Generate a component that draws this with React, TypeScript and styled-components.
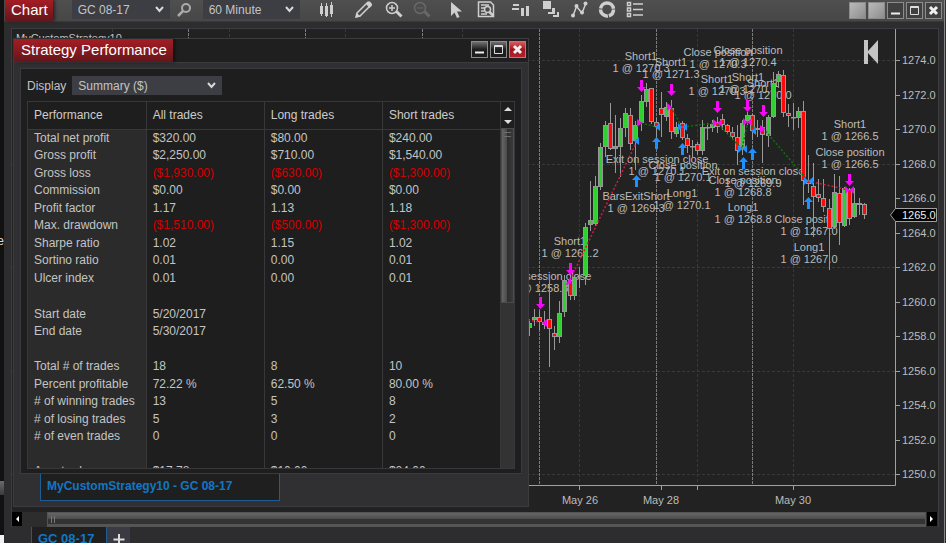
import React from "react";
import styled, { createGlobalStyle, css } from "styled-components";

const GlobalStyle = createGlobalStyle`
  * { box-sizing: border-box; }
  html, body { margin: 0; background: #121212; }
  body, button, select { font-family: "Liberation Sans", Arial, sans-serif; font-size: 12px; color: #c4c4c4; }
  button { padding: 0; border: 0; background: none; }
`;

const Desktop = styled.div`
  display: flex;
  height: 100vh;
  overflow: hidden;
  background: #2a2c30;
`;

const Behind = styled.div`
  width: 4px;
  flex: none;
  display: flex;
  flex-direction: column;
  overflow: hidden;
  background: #111111;
  color: #d8d8d8;
  line-height: 16px;
`;
const BehindText = styled.span`
  direction: rtl;
  margin-top: auto;
  flex: 0 0 16px;
`;
const BehindBar = styled.div`
  margin-top: auto;
  height: 14px;
  background: linear-gradient(#6a6a6a, #3a3a3a);
`;
const BehindPaper = styled.div`
  margin-top: 40px;
  height: 8px;
  background: #f0f0f0;
`;

const ChartWindow = styled.main`
  flex: 1;
  min-width: 0;
  margin-right: 1px;
  display: flex;
  flex-direction: column;
  background: #2d2d30;
  border-right: 1px solid #85878a;
`;

const Toolbar = styled.header`
  flex: none;
  height: 22px;
  display: flex;
  align-items: flex-start;
  background: linear-gradient(#4f4f4f, #474747);
  border-bottom: 1px solid #3a3a3c;
`;

const titleTab = css`
  margin: 0;
  font-size: 15px;
  font-weight: 400;
  color: #ffffff;
  background: linear-gradient(#a51d24, #64161b);
  box-shadow: 2px 0 3px rgba(0, 0, 0, 0.5);
`;
const ChartTitle = styled.h1`
  ${titleTab}
  padding: 0 5px 0 6px;
  margin-left: 1px;
  line-height: 20px;
  height: 21px;
`;

const Picker = styled.div<{ $width: number; $left: number }>`
  position: relative;
  flex: none;
  width: ${(p) => p.$width}px;
  margin-left: ${(p) => p.$left}px;
  color: #d8d8d8;
`;
const PickerSelect = styled.select`
  appearance: none;
  display: block;
  width: 100%;
  height: 19px;
  padding: 0 20px 0 6px;
  border: 0;
  border-radius: 0;
  background: #3d3d44;
  outline: none;
`;
const PickerArrow = styled.svg`
  position: absolute;
  right: 5px;
  top: 5px;
  width: 11px;
  height: 9px;
  pointer-events: none;
`;

const ToolButton = styled.button<{ $left: number; $dim?: boolean }>`
  flex: none;
  width: 20px;
  height: 20px;
  margin-left: ${(p) => p.$left}px;
  color: ${(p) => (p.$dim ? "#686868" : "#cfcfcf")};
`;
const Icon = styled.svg`
  display: block;
  width: 20px;
  height: 20px;
`;

const WindowButtons = styled.div<{ $gap: number }>`
  display: flex;
  gap: ${(p) => p.$gap}px;
  margin-left: auto;
  padding: 2px 2px 0 0;
`;
const WinButton = styled.button<{ $kind?: "link" | "close" | "dark" }>`
  width: 17px;
  height: 17px;
  border: 1px solid #8c8c8c;
  background: ${(p) =>
    p.$kind === "link"
      ? "linear-gradient(135deg, #b9b9b9, #a0a0a0 60%, #8b8b8b)"
      : p.$kind === "close"
        ? "linear-gradient(#d55a60, #a5151d 50%, #b3222a)"
        : p.$kind === "dark"
          ? "linear-gradient(#707070, #1e1e1e 50%)"
          : "#404040"};
`;
const WinIcon = styled.svg`
  display: block;
  width: 15px;
  height: 15px;
`;

const Workspace = styled.section`
  position: relative;
  flex: 1;
  min-height: 0;
  display: flex;
  flex-direction: column;
  margin: 6px 5px 0 7px;
  border: 1px solid #3c3c40;
  border-bottom: 0;
  background: #222222;
`;
const Plot = styled.svg`
  flex: 1;
  min-height: 0;
  display: block;
  width: 100%;
  font-family: "Liberation Sans", Arial, sans-serif;
  font-size: 11px;
`;

const HScroll = styled.div`
  flex: none;
  height: 15px;
  display: flex;
  gap: 1px;
  background: #2d2d2d;
`;
const HScrollButton = styled.button`
  width: 10px;
  height: 14px;
  margin: 0 1px 0 0;
  background: #000000;
`;
const HTrack = styled.div`
  flex: 1;
  padding-left: 23px;
`;
const HThumb = styled.div`
  height: 15px;
  padding: 3px 3px;
  border: 1px solid #555555;
  background: linear-gradient(#666666, #4a4a4a 50%, #333333 50%, #333333 85%, #555555 85%);
`;
const Grip = styled.div`
  width: 4px;
  height: 7px;
  border: 1px solid #777777;
  border-width: 0 1px;
`;

const SheetTabs = styled.nav`
  flex: none;
  height: 16px;
  padding-left: 27px;
  display: flex;
  overflow: hidden;
`;
const SheetTab = styled.button`
  height: 24px;
  padding: 0 12px 0 6px;
  border: 1px solid #1e5c92;
  border-top: 0;
  background: #1f1f1f;
  color: #1177c4;
  font-size: 13px;
  font-weight: 700;
  line-height: 24px;
`;
const AddTab = styled.button`
  width: 23px;
  height: 24px;
  background: #3b3a42;
`;

const Dialog = styled.section`
  position: absolute;
  left: 1px;
  top: 9px;
  width: 516px;
  max-width: 100%;
  display: flex;
  flex-direction: column;
  border: 1px solid #3c3c40;
  background: #303033;
`;
const DialogHeader = styled.header`
  display: flex;
  height: 24px;
  background: #1f1f1f;
  border-bottom: 1px solid #3c3c40;
`;
const DialogTitle = styled.h2`
  ${titleTab}
  padding: 0 6px 0 7px;
  line-height: 22px;
`;
const DialogBody = styled.div`
  margin: 5px 6px 0;
  padding: 7px 6px 4px;
  border: 1px solid #3a3a3d;
  background: #1e1e1e;
`;
const Field = styled.label`
  display: flex;
  align-items: center;
  margin-bottom: 6px;
`;
const Report = styled.div`
  display: grid;
  grid-template-columns: 1fr 13px;
  height: 368px;
  overflow: hidden;
  border: 1px solid #38383a;
`;
const ReportTable = styled.table`
  width: 100%;
  height: min-content;
  table-layout: fixed;
  border-collapse: collapse;
`;
const HeadCell = styled.th`
  height: 27px;
  padding: 0 6px;
  font-weight: 400;
  text-align: left;
  color: #cccccc;
  border-right: 1px solid #38383a;
  border-bottom: 1px solid #38383a;
  width: 25%;
`;
const Row = styled.tr<{ $blank: boolean }>`
  height: 18px;
  line-height: 17px;
  &:nth-child(even) { height: ${(p) => (p.$blank ? 18 : 17)}px; }
`;
const NameCell = styled.th`
  padding: 0 6px;
  font-weight: 400;
  text-align: left;
  white-space: nowrap;
  background: #2b2b2b;
  border-right: 1px solid #38383a;
`;
const Cell = styled.td<{ $loss: boolean }>`
  padding: 0 6px;
  white-space: nowrap;
  border-right: 1px solid #38383a;
  color: ${(p) => (p.$loss ? "#d20000" : "inherit")};
`;
const VScroll = styled.div`
  display: flex;
  flex-direction: column;
  background: #333333;
`;
const VScrollButton = styled.button`
  height: 13px;
  background: #1e1e1e;
`;
const VThumb = styled.div`
  height: 175px;
  padding: 3px 2px;
  border: 1px solid #4c4c4c;
  background: linear-gradient(90deg, #666666, #484848 48%, #2e2e2e 50%, #3a3a3a);
`;
const VGrip = styled.div`
  height: 5px;
  border: 1px solid #6c6c6c;
  border-width: 1px 0;
`;
const ScrollIcon = styled.svg`
  display: block;
  margin: auto;
  width: 10px;
  height: 10px;
`;
const StrategyTab = styled.button`
  align-self: flex-start;
  width: 240px;
  height: 27px;
  margin: 0 0 5px 26px;
  padding: 0 0 2px 6px;
  text-align: left;
  font-weight: 700;
  color: #1177c4;
  background: #1f1f1f;
  border: 1px solid #1e5c92;
  border-top: 0;
`;

const rows: string[][] = [
  ["Total net profit", "$320.00", "$80.00", "$240.00"],
  ["Gross profit", "$2,250.00", "$710.00", "$1,540.00"],
  ["Gross loss", "($1,930.00)", "($630.00)", "($1,300.00)"],
  ["Commission", "$0.00", "$0.00", "$0.00"],
  ["Profit factor", "1.17", "1.13", "1.18"],
  ["Max. drawdown", "($1,510.00)", "($500.00)", "($1,300.00)"],
  ["Sharpe ratio", "1.02", "1.15", "1.02"],
  ["Sortino ratio", "0.01", "0.00", "0.01"],
  ["Ulcer index", "0.01", "0.00", "0.01"],
  ["", "", "", ""],
  ["Start date", "5/20/2017", "", ""],
  ["End date", "5/30/2017", "", ""],
  ["", "", "", ""],
  ["Total # of trades", "18", "8", "10"],
  ["Percent profitable", "72.22 %", "62.50 %", "80.00 %"],
  ["# of winning trades", "13", "5", "8"],
  ["# of losing trades", "5", "3", "2"],
  ["# of even trades", "0", "0", "0"],
  ["", "", "", ""],
  ["Avg. trade", "$17.78", "$10.00", "$24.00"],
];

type Candle = [x: number, high: number, low: number, top: number, bottom: number, up: 0 | 1];
const candles: Candle[] = [
  [529, 319, 336, 323, 328, 1], [534, 309, 326, 317, 320, 1], [539, 311, 330, 317, 322, 0],
  [544, 311, 329, 322, 325, 1], [549, 280, 367, 319, 329, 0], [554, 326, 350, 333, 337, 0],
  [559, 301, 343, 313, 337, 1], [564, 275, 317, 280, 312, 1], [570, 274, 300, 280, 296, 0],
  [574, 275, 300, 277, 296, 1], [579, 267, 288, 276, 277, 1], [585, 223, 285, 227, 276, 1],
  [590, 181, 231, 220, 225, 1], [595, 176, 226, 186, 224, 1], [600, 143, 190, 147, 187, 1],
  [605, 121, 157, 125, 147, 1], [610, 103, 150, 123, 149, 0], [615, 115, 173, 146, 149, 1],
  [620, 118, 177, 128, 147, 1], [625, 108, 137, 113, 128, 1], [630, 108, 150, 115, 144, 0],
  [635, 121, 170, 125, 141, 1], [641, 95, 131, 101, 123, 1], [646, 83, 107, 89, 102, 1],
  [651, 88, 124, 88, 122, 0], [656, 118, 137, 122, 127, 0], [661, 92, 137, 108, 115, 0],
  [666, 102, 121, 107, 117, 1], [671, 100, 139, 108, 132, 0], [676, 122, 137, 127, 134, 1],
  [682, 121, 140, 123, 138, 0], [687, 134, 153, 138, 146, 0], [692, 140, 157, 146, 147, 1],
  [697, 142, 155, 144, 151, 0], [702, 120, 155, 127, 151, 1], [707, 123, 140, 127, 128, 1],
  [712, 120, 132, 124, 128, 1], [717, 117, 133, 122, 127, 0], [722, 114, 130, 119, 125, 0],
  [727, 124, 134, 125, 132, 0], [732, 127, 140, 132, 137, 0], [737, 125, 165, 137, 151, 0],
  [742, 120, 155, 123, 149, 1], [747, 112, 125, 115, 121, 1], [752, 114, 140, 115, 131, 0],
  [757, 120, 137, 128, 130, 1], [762, 120, 163, 127, 135, 0], [768, 115, 147, 117, 136, 1],
  [773, 72, 118, 83, 117, 1], [778, 71, 88, 74, 82, 1], [783, 70, 117, 75, 113, 0],
  [788, 104, 127, 113, 116, 0], [793, 103, 130, 117, 118, 1], [798, 107, 128, 111, 118, 1],
  [803, 101, 205, 111, 181, 0], [808, 155, 193, 181, 184, 0], [813, 163, 237, 186, 197, 0],
  [818, 179, 202, 194, 198, 0], [823, 179, 212, 198, 207, 0], [829, 199, 270, 208, 229, 0],
  [834, 174, 229, 192, 227, 1], [839, 176, 245, 193, 223, 0], [844, 187, 227, 188, 226, 1],
  [849, 188, 225, 189, 219, 0], [854, 188, 218, 203, 217, 1], [859, 198, 215, 203, 205, 0],
  [864, 203, 219, 204, 215, 0],
];

type Note = [x: number, y: number, name: string, price: string];
const notes: Note[] = [
  [570, 245, "Short1", "1261.2"], [540, 280, "Exit on session close", "1258.8"],
  [641, 60, "Short1", "1270.3"], [671, 66, "Short1", "1271.3"],
  [718, 56, "Close position", "1270.3"], [748, 54, "Close position", "1270.4"],
  [717, 83, "Short1", "1270.3"], [748, 81, "Short1", "1270.1"], [763, 87, "Short1", "1270.0"],
  [657, 163, "Exit on session close", "1270.1"], [683, 169, "Close position", "1270.1"],
  [636, 200, "BarsExitShort", "1269.3"], [682, 197, "Long1", "1270.1"],
  [753, 175, "Exit on session close", "1269.9"], [743, 184, "Close position", "1268.8"],
  [743, 211, "Long1", "1268.8"], [809, 223, "Close position", "1267.0"],
  [809, 251, "Long1", "1267.0"], [850, 128, "Short1", "1266.5"],
  [850, 156, "Close position", "1266.5"],
];

const sells = [[540, 309], [570, 275], [641, 92], [671, 96], [717, 113], [747, 112], [763, 117], [849, 186]];
const buys = [[636, 175], [656, 137], [682, 143], [743, 157], [752, 148], [808, 197]];
const losses = ["M528 320L540 322", "M570 280L637 141", "M808 181L849 190"];
const gains = ["M641 123L656 127", "M671 107L682 127L717 123L742 149L748 121L757 131", "M763 128L808 181"];
const sellMarks = ["M547 319v8l-5-4z", "M565 285l6-2v-6z", "M637 119v8l5-4z", "M667 103v8l5-4z", "M713 119v8l9-8v8z", "M743 118v8l9-8v8z", "M760 125v8l5-4z", "M845 186v8l9-8v8z"];
const buyMarks = ["M639 137v8l-5-4z", "M660 123v8l-5-4z", "M678 123v8l9-8v8z", "M738 145v8l9-8v8z", "M756 127v8l-5-4z", "M804 177v8l9-8v8z"];
const prices = Array.from({ length: 13 }, (_, i) => 1274 - i * 2);
const priceY = (p: number) => 60 + (1274 - p) * 17.25;

function PriceChart() {
  return (
    <Plot viewBox="12 29 926 483" preserveAspectRatio="xMaxYMin meet" role="img" aria-label="GC 08-17 60 minute chart">
      <g stroke="#393939" strokeDasharray="3 2">
        {[1274, 1268, 1262, 1256, 1250].map((p) => <path key={p} d={`M12 ${Math.round(priceY(p)) + 0.5}H895`} />)}
        {[112, 229, 345, 462, 579, 697, 793].map((x) => <path key={x} d={`M${x}.5 29V484`} />)}
      </g>
      <g stroke="#7c7c7c" strokeDasharray="3 1">
        {[188, 305, 422, 539, 656, 752].map((x) => <path key={x} d={`M${x}.5 29V484`} />)}
      </g>
      <text x="16" y="42" fill="#c4c4c4">MyCustomStrategy10</text>
      <g fill="#bcbcbc" textAnchor="middle">
        {notes.map(([x, y, name, price], i) => (
          <React.Fragment key={i}>
            <text x={x} y={y}>{name}</text>
            <text x={x} y={y + 12}>{`1 @ ${price}`}</text>
          </React.Fragment>
        ))}
      </g>
      {candles.map(([x, high, low, top, bottom, up]) => (
        <g key={x} stroke="#989898">
          <path d={`M${x}.5 ${high}V${low}`} />
          <rect x={x - 1.5} y={top + 0.5} width="4" height={Math.max(bottom - top - 1, 0.5)} fill={up ? "#2fd02f" : "#ff0808"} />
        </g>
      ))}
      <g fill="none" strokeDasharray="2 2" strokeWidth="1.500">
        {losses.map((d) => <path key={d} d={d} stroke="#d01c40" />)}
        {gains.map((d) => <path key={d} d={d} stroke="#0a730a" />)}
      </g>
      <g fill="#f808f8">
        {sells.map(([x, y]) => <path key={x} d={`M${x - 1} ${y - 12}h3v7h3l-4.500 5l-4.500 -5h3z`} />)}
        {sellMarks.map((d) => <path key={d} d={d} />)}
      </g>
      <g fill="#1e90ff">
        {buys.map(([x, y]) => <path key={x} d={`M${x - 1} ${y + 12}h3v-7h3l-4.500 -5l-4.500 5h3z`} />)}
        {buyMarks.map((d) => <path key={d} d={d} />)}
      </g>
      <path d="M864 40h4v11l10-11v24l-10-11v11h-4z" fill="#c4c4c4" />
      <g stroke="#a0a0a0" fill="none">
        <path d="M895.5 29V485.500H528" />
        {prices.map((p) => <path key={p} d={`M896 ${Math.round(priceY(p)) + 0.5}h4`} />)}
        {[579, 661, 697, 793].map((x) => <path key={x} d={`M${x}.5 486v4`} />)}
      </g>
      <g fill="#bcbcbc">
        {prices.map((p) => <text key={p} x="902" y={Math.round(priceY(p)) + 4}>{p.toFixed(1)}</text>)}
        <g textAnchor="middle">
          <text x="580" y="504">May 26</text>
          <text x="661" y="504">May 28</text>
          <text x="793" y="504">May 30</text>
        </g>
      </g>
      <path d="M890.500 215l5-6.500h41v13h-41z" fill="#000" stroke="#a0a0a0" />
      <text x="902" y="219" fill="#eeeeee">1265.0</text>
    </Plot>
  );
}

function Select({ label, value, width, left }: { label: string; value: string; width: number; left: number }) {
  return (
    <Picker $width={width} $left={left}>
      <PickerSelect aria-label={label} defaultValue={value}><option>{value}</option></PickerSelect>
      <PickerArrow viewBox="0 0 11 9"><path d="M2 2l3.500 4L9 2" fill="none" stroke="currentColor" strokeWidth="2" /></PickerArrow>
    </Picker>
  );
}

const line = { fill: "none", stroke: "currentColor" };
const tools: { name: string; left: number; dim?: boolean; art: React.ReactNode }[] = [
  { name: "Chart style", left: 17, art: <><path d="M3 6h3v8H3zM8 6h3v10H8zM13 5h3v9h-3z" fill="currentColor" /><path d="M4.500 3v13M9.500 3v14M14.500 2v15" {...line} /></> },
  { name: "Drawing tools", left: 17, art: <><path d="M3 13L13.500 2.500l3 3L6 16l-4 1z" {...line} strokeWidth="1.500" /><path d="M2 17.500l1-4.500 3.500 3.500zM12 4l2-2.500h2L18 4v1.500L15.500 8z" fill="currentColor" /></> },
  { name: "Zoom in", left: 10, art: <><circle cx="8" cy="8" r="5.500" {...line} strokeWidth="1.500" /><path d="M8 5v6M5 8h6" {...line} strokeWidth="1.500" /><path d="M12.500 11.500l5 5" {...line} strokeWidth="3" /></> },
  { name: "Zoom out", left: 8, dim: true, art: <><circle cx="8" cy="8" r="5.500" {...line} strokeWidth="1.500" /><path d="M5 8h6" {...line} /><path d="M12.500 11.500l5 5" {...line} strokeWidth="3" /></> },
  { name: "Cursor", left: 14, art: <path d="M5 2v14l3.500-3.500L11 18l2.500-1L11 11.500h5z" fill="currentColor" /> },
  { name: "Data box", left: 10, art: <><path d="M2.500 2h12l3 3v11.500h-15zM5 5h8M5 8h4M5 11h3M5 14h6" {...line} strokeWidth="1.500" /><circle cx="11.500" cy="9.500" r="3" fill="#4b4b4b" stroke="currentColor" strokeWidth="1.500" /><path d="M13.500 12l4 4" {...line} strokeWidth="2.500" /></> },
  { name: "Indicators", left: 14, art: <path d="M3 4h6v2H3zM2 8h7v2H2zM11 8h3v8h-3zM16 6h3v10h-3z" fill="currentColor" /> },
  { name: "Strategies", left: 11, art: <path d="M2 1h8v8h-8zM11 8v4h-4v2h7v-6zM16 12v3h-4v2h6v-5z" fill="currentColor" /> },
  { name: "Line study", left: 8, art: <><path d="M4 16l3.500-9.500L13 13l4-10" {...line} strokeWidth="1.500" /><g fill="currentColor"><circle cx="4" cy="15.500" r="2" /><circle cx="7.500" cy="6" r="2" /><circle cx="13" cy="12.500" r="2" /><circle cx="16.500" cy="3.500" r="2" /></g></> },
  { name: "Trader", left: 8, art: <circle cx="10" cy="9.500" r="6.500" {...line} strokeWidth="3.500" strokeDasharray="8 1 11 1 18 2" /> },
  { name: "Properties", left: 8, art: <path d="M2.500 2.500h3v3h-3zM2.500 8h3v3h-3zM2.500 13.500h3v3h-3zM8 4h10M8 9.500h10M8 15h10" {...line} strokeWidth="1.500" /> },
];

const Minimize = () => <WinIcon viewBox="0 0 15 15"><path d="M3 10.500h9" stroke="#eee" strokeWidth="2" /></WinIcon>;
const Maximize = () => <WinIcon viewBox="0 0 15 15"><path d="M3.500 3.500h8v8h-8zM3 4.500h9" fill="none" stroke="#ddd" /></WinIcon>;
const Close = () => <WinIcon viewBox="0 0 15 15"><path d="M4 4l7 7M11 4l-7 7" stroke="#f0f0f0" strokeWidth="3" /></WinIcon>;

function PerformanceDialog() {
  return (
    <Dialog aria-labelledby="perf-title">
      <DialogHeader>
        <DialogTitle id="perf-title">Strategy Performance</DialogTitle>
        <WindowButtons $gap={2}>
          <WinButton $kind="dark" aria-label="Minimize performance"><Minimize /></WinButton>
          <WinButton $kind="dark" aria-label="Maximize performance"><Maximize /></WinButton>
          <WinButton $kind="close" aria-label="Close performance"><Close /></WinButton>
        </WindowButtons>
      </DialogHeader>
      <DialogBody>
        <Field>Display<Select label="Display" value="Summary ($)" width={150} left={6} /></Field>
        <Report>
          <ReportTable>
            <thead>
              <tr>{["Performance", "All trades", "Long trades", "Short trades"].map((h) => <HeadCell key={h} scope="col">{h}</HeadCell>)}</tr>
            </thead>
            <tbody>
              {rows.map(([name, ...values], i) => (
                <Row key={i} $blank={!name}>
                  <NameCell scope="row">{name}</NameCell>
                  {values.map((v, j) => <Cell key={j} $loss={v.startsWith("(")}>{v}</Cell>)}
                </Row>
              ))}
            </tbody>
          </ReportTable>
          <VScroll>
            <VScrollButton aria-label="Scroll up"><ScrollIcon viewBox="0 0 10 10"><path d="M1 7l4-4 4 4z" fill="#ddd" /></ScrollIcon></VScrollButton>
            <VScrollButton aria-label="Scroll down"><ScrollIcon viewBox="0 0 10 10"><path d="M1 3l4 4 4-4z" fill="#ddd" /></ScrollIcon></VScrollButton>
            <VThumb><VGrip /></VThumb>
          </VScroll>
        </Report>
      </DialogBody>
      <StrategyTab>MyCustomStrategy10 - GC 08-17</StrategyTab>
    </Dialog>
  );
}

export default function App() {
  return (
    <Desktop>
      <GlobalStyle />
      <Behind aria-hidden="true">
        <BehindText>e</BehindText>
        <BehindBar />
        <BehindPaper />
      </Behind>
      <ChartWindow>
        <Toolbar>
          <ChartTitle>Chart</ChartTitle>
          <Select label="Instrument" value="GC 08-17" width={98} left={19} />
          <ToolButton $left={5} aria-label="Find instrument">
            <Icon viewBox="0 0 20 20"><circle cx="11" cy="8" r="4" fill="none" stroke="#aaa" strokeWidth="2" /><path d="M8 11l-5 5" stroke="#aaa" strokeWidth="2.500" /></Icon>
          </ToolButton>
          <Select label="Interval" value="60 Minute" width={97} left={8} />
          {tools.map((t) => (
            <ToolButton key={t.name} $left={t.left} $dim={t.dim} aria-label={t.name}><Icon viewBox="0 0 20 20">{t.art}</Icon></ToolButton>
          ))}
          <WindowButtons $gap={2}>
            <WinButton $kind="link" aria-label="Link instrument" />
            <WinButton $kind="link" aria-label="Link interval" />
            <WinButton aria-label="Minimize chart"><Minimize /></WinButton>
            <WinButton aria-label="Maximize chart"><Maximize /></WinButton>
            <WinButton aria-label="Close chart"><Close /></WinButton>
          </WindowButtons>
        </Toolbar>
        <Workspace>
          <PriceChart />
          <PerformanceDialog />
          <HScroll>
            <HScrollButton aria-label="Scroll left"><ScrollIcon viewBox="0 0 10 10"><path d="M7 2L4 5l3 3z" fill="#fff" /></ScrollIcon></HScrollButton>
            <HTrack><HThumb><Grip /></HThumb></HTrack>
            <HScrollButton aria-label="Scroll right"><ScrollIcon viewBox="0 0 10 10"><path d="M3 2l3 3-3 3z" fill="#fff" /></ScrollIcon></HScrollButton>
          </HScroll>
        </Workspace>
        <SheetTabs aria-label="Chart tabs">
          <SheetTab>GC 08-17</SheetTab>
          <AddTab aria-label="Add tab"><Icon viewBox="0 0 20 20"><path d="M12 5v11M6.500 10.500h11" stroke="#ddd" strokeWidth="2" /></Icon></AddTab>
        </SheetTabs>
      </ChartWindow>
    </Desktop>
  );
}
